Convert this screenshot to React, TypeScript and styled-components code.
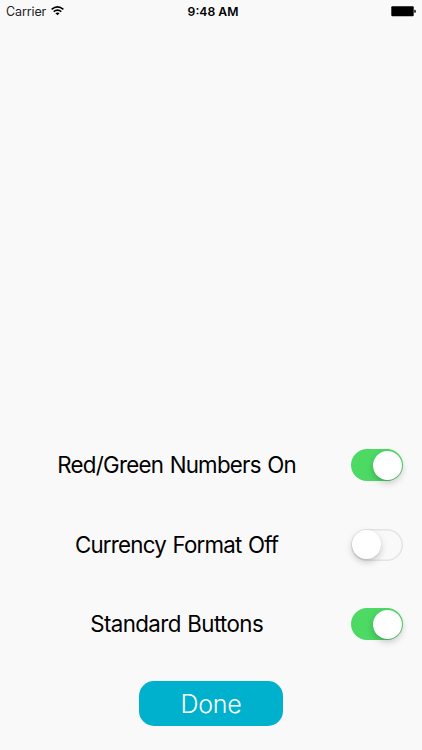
import React from 'react';
import styled, { createGlobalStyle } from 'styled-components';

const GlobalStyle = createGlobalStyle`
  * { box-sizing: border-box; }
  body { margin: 0; background: #f9f9f9; font-family: Inter, 'Liberation Sans', sans-serif; color: #000; }
`;

const Screen = styled.main`
  display: flex;
  flex-direction: column;
  height: 750px;
  width: 422px;
  overflow: hidden;
`;

const StatusBar = styled.header`
  display: grid;
  grid-template-columns: 1fr auto 1fr;
  align-items: center;
  height: 22px;
  padding: 0 6px 0 6px;
`;

const Carrier = styled.div`
  display: flex;
  align-items: center;
  gap: 5px;
  font-size: 12.5px;
  line-height: 21px;
  letter-spacing: -0.12px;
  color: #222;
`;

const CarrierName = styled.span`
  width: 40px;
  padding-top: 1px;
  white-space: nowrap;
`;

const Clock = styled.time`
  padding: 1px 0 0 4px;
  font-weight: 600;
  font-size: 12.2px;
  line-height: 21px;
`;

const Battery = styled.svg`
  justify-self: end;
`;

const Settings = styled.section`
  display: flex;
  flex-direction: column;
  gap: 47.5px;
  margin-top: 427px;
`;

const Row = styled.div`
  display: grid;
  grid-template-columns: 1fr 52px;
  align-items: center;
  height: 32px;
  padding-right: 18.7px;
`;

const Name = styled.span<{ $spacing: number }>`
  padding-left: 2px;
  text-align: center;
  font-size: 22.3px;
  line-height: 32px;
  white-space: nowrap;
  word-spacing: 1px;
  letter-spacing: ${p => p.$spacing}px;
`;

const Track = styled.button<{ $on: boolean }>`
  display: flex;
  align-items: center;
  justify-content: ${p => (p.$on ? 'flex-end' : 'flex-start')};
  width: 52px;
  height: 32px;
  padding: 0 1px;
  border: 0;
  border-radius: 16px;
  background: ${p => (p.$on ? '#4cd964' : '#f9f9f9')};
  box-shadow: ${p => (p.$on ? 'none' : 'inset 0 0 0 1.5px #e4e4e4')};
`;

const Knob = styled.span`
  width: 29px;
  height: 29px;
  border-radius: 50%;
  background: #fff;
  box-shadow: 0 3px 7px rgba(0, 0, 0, 0.2), 0 1px 1px rgba(0, 0, 0, 0.06);
`;

const Done = styled.button`
  align-self: center;
  width: 144px;
  height: 45px;
  margin-top: 41px;
  padding: 1px 0 0;
  border: 0;
  border-radius: 15px;
  background: #00b1ce;
  color: #fff;
  font: 300 25px/44px Inter, sans-serif;
  letter-spacing: -0.3px;
`;

const options = [
  { label: 'Red/Green Numbers On', on: true, spacing: -0.75 },
  { label: 'Currency Format Off', on: false, spacing: -0.78 },
  { label: 'Standard Buttons', on: true, spacing: -0.6 },
];

export default function App() {
  return (
    <Screen>
      <GlobalStyle />
      <StatusBar>
        <Carrier>
          <CarrierName>Carrier</CarrierName>
          <svg width="13" height="10" viewBox="0 0 13 10" fill="none" stroke="#000" strokeWidth="1.6">
            <path d="M.6 3.4Q6.5-1.6 12.4 3.4M2.7 5.7Q6.5 2.5 10.3 5.7" />
            <path d="M4.4 7.2Q6.5 5.7 8.6 7.2L6.5 9.3Z" fill="#000" stroke="none" />
          </svg>
        </Carrier>
        <Clock>9:48 AM</Clock>
        <Battery width="26" height="11" viewBox="0 0 26 11">
          <rect x="1.3" y=".3" width="22.4" height="9.9" rx="1" fill="#000" />
          <path d="M24.3 3.8H25Q25.8 3.8 25.8 5.3T25 6.8H24.3Z" />
        </Battery>
      </StatusBar>
      <Settings>
        {options.map(option => (
          <Row key={option.label}>
            <Name $spacing={option.spacing}>{option.label}</Name>
            <Track $on={option.on} role="switch" aria-checked={option.on} aria-label={option.label}>
              <Knob />
            </Track>
          </Row>
        ))}
      </Settings>
      <Done>Done</Done>
    </Screen>
  );
}
